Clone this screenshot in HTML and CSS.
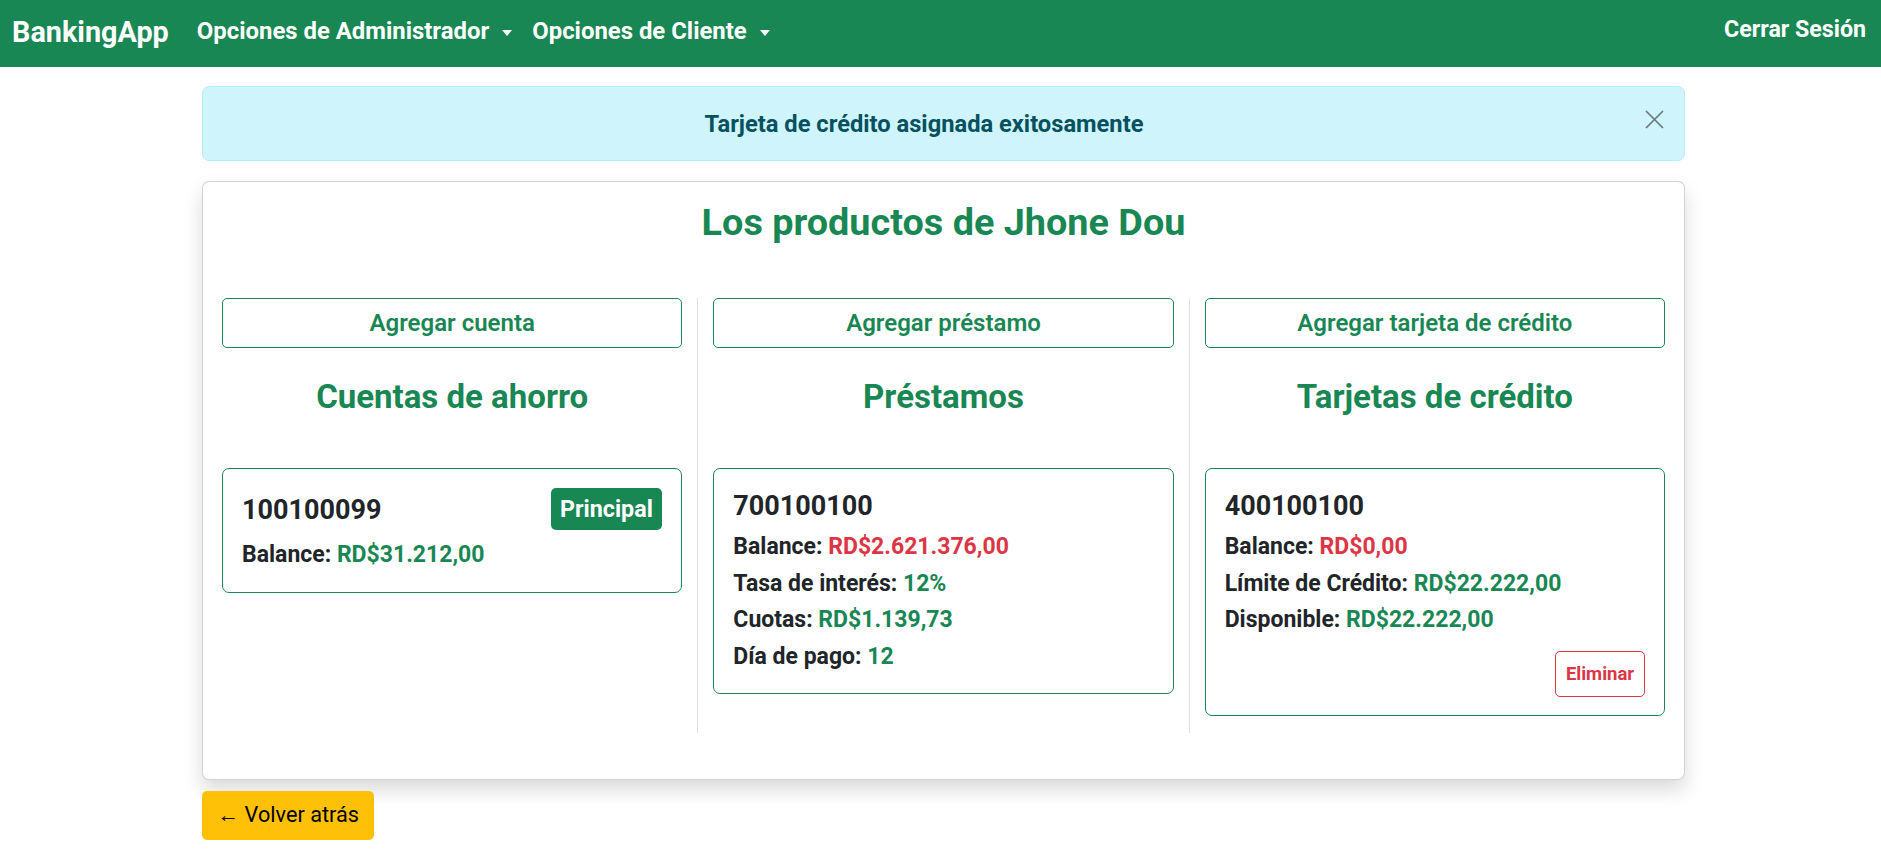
FILE: index.html
```html
<!DOCTYPE html>
<html lang="es">
<head>
<meta charset="utf-8">
<title>BankingApp</title>
<link rel="stylesheet" href="styles.css">
</head>
<body>
<nav class="navbar">
  <a class="brand" href="#">BankingApp</a>
  <ul class="nav-links">
    <li><a class="nav-link dropdown-toggle" href="#">Opciones de Administrador</a></li>
    <li><a class="nav-link dropdown-toggle" href="#">Opciones de Cliente</a></li>
  </ul>
  <a class="logout" href="#">Cerrar Sesión</a>
</nav>

<main class="container">
  <div class="alert">
    <span class="alert-text">Tarjeta de crédito asignada exitosamente</span>
    <button class="btn-close" aria-label="Close">
      <svg viewBox="0 0 19 19" width="19" height="19"><path d="M1 1L18 18M18 1L1 18" stroke="currentColor" stroke-width="1.7" fill="none"/></svg>
    </button>
  </div>

  <section class="card">
    <h2 class="card-title">Los productos de Jhone Dou</h2>
    <div class="products">
      <div class="col">
        <a class="btn-outline" href="#">Agregar cuenta</a>
        <h3 class="col-title">Cuentas de ahorro</h3>
        <div class="product">
          <div class="product-head">
            <h5 class="product-number">100100099</h5>
            <span class="badge">Principal</span>
          </div>
          <p class="line">Balance: <span class="green">RD$31.212,00</span></p>
        </div>
      </div>
      <div class="divider"></div>
      <div class="col">
        <a class="btn-outline" href="#">Agregar préstamo</a>
        <h3 class="col-title">Préstamos</h3>
        <div class="product">
          <h5 class="product-number single">700100100</h5>
          <p class="line">Balance: <span class="red">RD$2.621.376,00</span></p>
          <p class="line">Tasa de interés: <span class="green">12%</span></p>
          <p class="line">Cuotas: <span class="green">RD$1.139,73</span></p>
          <p class="line">Día de pago: <span class="green">12</span></p>
        </div>
      </div>
      <div class="divider"></div>
      <div class="col">
        <a class="btn-outline" href="#">Agregar tarjeta de crédito</a>
        <h3 class="col-title">Tarjetas de crédito</h3>
        <div class="product">
          <h5 class="product-number single">400100100</h5>
          <p class="line">Balance: <span class="red">RD$0,00</span></p>
          <p class="line">Límite de Crédito: <span class="green">RD$22.222,00</span></p>
          <p class="line">Disponible: <span class="green">RD$22.222,00</span></p>
          <div class="actions">
            <button class="btn-danger-outline">Eliminar</button>
          </div>
        </div>
      </div>
    </div>
  </section>

  <a class="btn-back" href="#">← Volver atrás</a>
</main>
</body>
</html>
```
FILE: styles.css
```css
* { box-sizing: border-box; }

body {
  margin: 0;
  font-family: Roboto, "Liberation Sans", sans-serif;
  color: #212529;
  background: #fff;
}

a { text-decoration: none; }

/* Navbar */
.navbar {
  display: flex;
  align-items: flex-start;
  height: 67px;
  padding: 0 15px 0 12px;
  background: #198754;
}
.brand {
  margin-top: 12px;
  margin-right: 28px;
  font-size: 28.8px;
  font-weight: 700;
  line-height: 40px;
  color: #fff;
}
.nav-links {
  display: flex;
  gap: 20px;
  margin: 13px 0 0;
  padding: 0;
  list-style: none;
}
.nav-link {
  display: flex;
  align-items: center;
  font-size: 23.9px;
  font-weight: 700;
  line-height: 36px;
  color: #fff;
}
.dropdown-toggle::after {
  content: "";
  display: inline-block;
  margin-left: 13px;
  margin-top: 3px;
  border-top: 6px solid #fff;
  border-left: 5px solid transparent;
  border-right: 5px solid transparent;
}
.logout {
  margin-left: auto;
  margin-top: 11px;
  font-size: 23.2px;
  font-weight: 700;
  line-height: 36px;
  color: #fff;
}

/* Container */
.container {
  width: 1483px;
  margin-left: 202px;
  padding-top: 19px;
}

/* Alert */
.alert {
  position: relative;
  display: flex;
  justify-content: center;
  align-items: center;
  height: 75px;
  padding: 0 58px 0 19px;
  background: #cff4fc;
  border: 1px solid #b6effb;
  border-radius: 7px;
  color: #055160;
}
.alert-text {
  font-size: 23.7px;
  font-weight: 700;
  line-height: 36px;
}
.btn-close {
  position: absolute;
  top: 23px;
  right: 20px;
  width: 19px;
  height: 19px;
  padding: 0;
  border: 0;
  background: transparent;
  color: #000;
  opacity: 0.5;
}
.btn-close svg { display: block; }

/* Card */
.card {
  margin-top: 20px;
  padding: 19px;
  background: #fff;
  border: 1px solid rgba(0, 0, 0, 0.175);
  border-radius: 7px;
  box-shadow: 0 10px 19px rgba(0, 0, 0, 0.15);
}
.card-title {
  margin: 0 0 55px;
  text-align: center;
  font-size: 37.8px;
  font-weight: 700;
  line-height: 42px;
  color: #198754;
}

.products {
  display: grid;
  grid-template-columns: 1fr 1px 1fr 1px 1fr;
  column-gap: 15px;
  margin-bottom: 27px;
}
.divider { background: #dee2e6; }
.col { padding-bottom: 17px; }

.btn-outline {
  display: flex;
  justify-content: center;
  align-items: center;
  height: 50px;
  border: 1px solid #198754;
  border-radius: 5px;
  font-size: 24px;
  font-weight: 600;
  color: #198754;
}
.col-title {
  margin: 29px 0 51px;
  text-align: center;
  font-size: 33px;
  font-weight: 700;
  line-height: 40px;
  color: #198754;
}

/* Product cards */
.product {
  padding: 21px 19px 18px;
  border: 1px solid #198754;
  border-radius: 7px;
}
.product-head {
  display: flex;
  justify-content: space-between;
  align-items: center;
  margin-bottom: 7px;
}
.product-number {
  margin: 0;
  font-size: 27px;
  font-weight: 700;
  line-height: 33px;
  color: #212529;
}
.product-number.single { margin-bottom: 6px; }
.badge {
  display: inline-flex;
  align-items: center;
  height: 42px;
  margin-top: -2px;
  padding: 0 9.5px;
  border-radius: 5px;
  background: #198754;
  color: #fff;
  font-size: 23.3px;
  font-weight: 700;
}
.line {
  margin: 0;
  font-size: 23px;
  font-weight: 700;
  line-height: 36.5px;
}
.green { color: #198754; }
.red { color: #dc3545; }

.actions {
  display: flex;
  justify-content: flex-end;
  margin-top: 12px;
}
.btn-danger-outline {
  display: inline-flex;
  align-items: center;
  justify-content: center;
  width: 90px;
  height: 46px;
  padding: 0;
  border: 1px solid #dc3545;
  border-radius: 5px;
  background: #fff;
  font-family: inherit;
  font-size: 18.5px;
  font-weight: 700;
  color: #dc3545;
}

/* Back button */
.btn-back {
  display: inline-flex;
  align-items: center;
  height: 49px;
  margin-top: 11px;
  padding: 0 15.5px;
  border-radius: 5px;
  background: #ffc107;
  font-size: 21.7px;
  font-weight: 400;
  color: #000;
}
```
